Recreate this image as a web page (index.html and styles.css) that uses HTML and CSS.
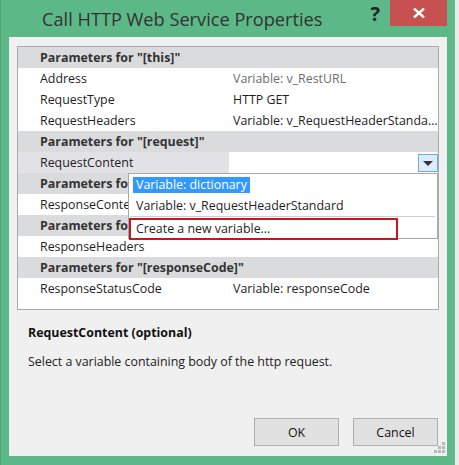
FILE: index.html
```html
<!DOCTYPE html>
<html>
<head>
<meta charset="utf-8">
<link rel="stylesheet" href="styles.css">
</head>
<body>
<div class="window">
  <div class="titlebar">
    <div class="title">Call HTTP Web Service Properties</div>
    <div class="help">?</div>
    <div class="close">
      <svg width="12" height="10" viewBox="0 0 12 10"><path d="M1 0.5 L11 9.5 M11 0.5 L1 9.5" stroke="#fff" stroke-width="2.4" fill="none"/></svg>
    </div>
  </div>
  <div class="client">
    <div class="grid">
      <div class="cat">Parameters for "[this]"</div>
      <div class="row"><div class="name">Address</div><div class="val muted">Variable: v_RestURL</div></div>
      <div class="row"><div class="name">RequestType</div><div class="val">HTTP GET</div></div>
      <div class="row"><div class="name">RequestHeaders</div><div class="val">Variable: v_RequestHeaderStandard</div></div>
      <div class="cat">Parameters for "[request]"</div>
      <div class="row sel"><div class="name">RequestContent</div><div class="val edit"><span class="ddbtn"><svg width="10" height="5" viewBox="0 0 10 5"><path d="M0 0 H10 L5 5 Z" fill="#333"/></svg></span></div></div>
      <div class="cat">Parameters for "[response]"</div>
      <div class="row"><div class="name">ResponseContent</div><div class="val"></div></div>
      <div class="cat">Parameters for "[responseHeaders]"</div>
      <div class="row"><div class="name">ResponseHeaders</div><div class="val"></div></div>
      <div class="cat">Parameters for "[responseCode]"</div>
      <div class="row"><div class="name">ResponseStatusCode</div><div class="val">Variable: responseCode</div></div>

      <div class="popup">
        <div class="item first"><span class="hl">Variable: dictionary</span></div>
        <div class="item second">Variable: v_RequestHeaderStandard</div>
        <div class="sep"></div>
        <div class="item create">Create a new variable...</div>
      </div>
    </div>
    <div class="desc">
      <div class="desc-title">RequestContent (optional)</div>
      <div class="desc-text">Select a variable containing body of the http request.</div>
    </div>
    <div class="buttons">
      <div class="btn">OK</div>
      <div class="btn">Cancel</div>
    </div>
    <svg class="grip" width="11" height="11" viewBox="0 0 11 11">
      <rect x="8" y="0" width="3" height="3" fill="#b9b9b9"/>
      <rect x="4" y="4" width="3" height="3" fill="#b9b9b9"/>
      <rect x="8" y="4" width="3" height="3" fill="#b9b9b9"/>
      <rect x="0" y="8" width="3" height="3" fill="#b9b9b9"/>
      <rect x="4" y="8" width="3" height="3" fill="#b9b9b9"/>
      <rect x="8" y="8" width="3" height="3" fill="#b9b9b9"/>
    </svg>
  </div>
</div>
</body>
</html>
```

FILE: styles.css
```css
html, body {
  margin: 0;
  padding: 0;
}
body {
  background: #ececec;
  font-family: "Open Sans", "Noto Sans", "DejaVu Sans", sans-serif;
  font-size: 12.4px;
  color: #1e1e1e;
  width: 459px;
  height: 465px;
  overflow: hidden;
}
.window {
  width: 455px;
  height: 465px;
  background: #5cb887;
  border-left: 1px solid #4ea476;
  box-sizing: border-box;
  display: flex;
  flex-direction: column;
}
.titlebar {
  height: 37px;
  flex: none;
  display: flex;
  align-items: flex-start;
}
.title {
  margin-left: 41px;
  margin-top: 6px;
  font-size: 18.2px;
  line-height: 26px;
  color: #333;
}
.help {
  margin-left: auto;
  margin-right: 10px;
  margin-top: 2px;
  font-size: 20px;
  font-weight: bold;
  line-height: 24px;
  color: #222;
}
.close {
  width: 57px;
  height: 26px;
  margin-right: 8px;
  background: #c75050;
  display: flex;
  align-items: center;
  justify-content: center;
}
.client {
  flex: 1;
  margin: 0 8px 9px 8px;
  background: #f0f0f0;
  padding: 9px 8px 0 8px;
  position: relative;
  display: flex;
  flex-direction: column;
}
.grid {
  flex: none;
  height: 264px;
  box-sizing: border-box;
  border: 1px solid #ababab;
  background: #fff;
  position: relative;
}
.cat {
  height: 21px;
  line-height: 21px;
  background: #dadbdc;
  font-weight: bold;
  color: #333;
  padding-left: 22px;
  white-space: nowrap;
  overflow: hidden;
}
.row {
  height: 21px;
  line-height: 21px;
  display: grid;
  grid-template-columns: 211px 1fr;
}
.name {
  padding-left: 22px;
  white-space: nowrap;
  overflow: hidden;
}
.val {
  padding-left: 4px;
  white-space: nowrap;
  overflow: hidden;
  text-overflow: ellipsis;
}
.muted {
  color: #6d6d6d;
}
.sel .name {
  background: #e2e2e6;
}
.edit {
  display: flex;
  justify-content: flex-end;
  align-items: flex-start;
  padding-left: 0;
}
.ddbtn {
  margin-top: 2px;
  width: 20px;
  height: 18px;
  box-sizing: border-box;
  border: 1px solid #6fa8e6;
  background: #dcecfc;
  display: flex;
  align-items: center;
  justify-content: center;
}
.popup {
  position: absolute;
  left: 110px;
  top: 126px;
  width: 310px;
  height: 66px;
  box-sizing: border-box;
  border: 1px solid #a8a8a8;
  background: #fff;
}
.item {
  white-space: nowrap;
}
.first {
  margin: 3px 0 0 4px;
  height: 16px;
  line-height: 16px;
}
.hl {
  display: inline-block;
  background: #3399ff;
  color: #fff;
  padding: 0 3px;
  height: 16px;
  line-height: 16px;
}
.second {
  margin: 3px 0 0 7px;
  height: 20px;
  line-height: 20px;
}
.sep {
  height: 1px;
  background: #cfcfcf;
  margin: 0 2px 1px 1px;
}
.create {
  width: 269px;
  height: 22px;
  box-sizing: border-box;
  border: 2px solid #bf1a22;
  line-height: 18px;
  padding-left: 5px;
}
.desc {
  padding-left: 11px;
  margin-top: 15px;
}
.desc-title {
  font-weight: bold;
  line-height: 16px;
  color: #111;
}
.desc-text {
  margin-top: 13px;
  line-height: 16px;
  color: #222;
}
.buttons {
  margin-top: auto;
  padding: 0 1px 10px 0;
  display: flex;
  justify-content: flex-end;
  gap: 14px;
}
.btn {
  width: 85px;
  height: 28px;
  box-sizing: border-box;
  border: 1px solid #adadad;
  background: #e1e1e1;
  display: flex;
  align-items: center;
  justify-content: center;
  color: #111;
}
.grip {
  position: absolute;
  right: 2px;
  bottom: 3px;
}
```
